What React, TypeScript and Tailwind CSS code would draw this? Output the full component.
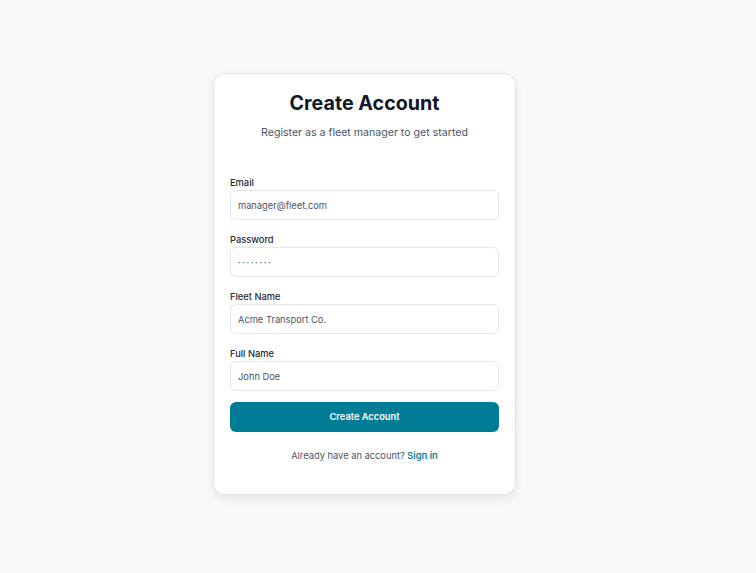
export default function App() {
  const fields = [
    { label: 'Email', type: 'email', placeholder: 'manager@fleet.com', extra: '' },
    { label: 'Password', type: 'password', placeholder: '········', extra: 'placeholder:tracking-[1.6px] placeholder:text-[#1f2937]' },
    { label: 'Fleet Name', type: 'text', placeholder: 'Acme Transport Co.', extra: '' },
    { label: 'Full Name', type: 'text', placeholder: 'John Doe', extra: '' },
  ];

  return (
    <div className="min-h-screen w-full bg-[#f8f9fb] pt-[73px] pr-[27px] font-['Inter','Noto_Sans',sans-serif]">
      <div className="mx-auto w-[303px] rounded-xl border border-[#e1e3e6] bg-white px-4 pt-[15px] pb-[30px] shadow-[0_4px_10px_rgba(0,0,0,0.08)]">
        {/* Header */}
        <h1 className="text-center text-[19.7px] leading-7 font-bold text-[#111827]">Create Account</h1>
        <p className="mt-[6px] text-center text-[10.6px] leading-5 text-[#4b5563]">
          Register as a fleet manager to get started
        </p>

        {/* Form */}
        <form className="mt-[33px] flex flex-col gap-[13px]" onSubmit={(e) => e.preventDefault()}>
          {fields.map((f) => (
            <div key={f.label} className="flex flex-col">
              <label className="text-[9.3px] leading-[14px] font-medium text-[#1f2937]">{f.label}</label>
              <input
                type={f.type}
                placeholder={f.placeholder}
                className={`h-[30px] w-full rounded-md border border-[#e5e7eb] px-[7px] text-[9.3px] text-[#374151] placeholder:text-[#4b5563] outline-none ${f.extra}`}
              />
            </div>
          ))}
          <button
            type="submit"
            className="-mt-[2px] h-[30px] w-full rounded-md bg-[#007c96] text-[9.3px] font-semibold text-white"
          >
            Create Account
          </button>
        </form>

        <p className="mt-[16px] text-center text-[9.3px] leading-4 text-[#4b5563]">
          Already have an account? <a href="#" className="font-semibold text-[#0e7c96]">Sign in</a>
        </p>
      </div>
    </div>
  );
}
